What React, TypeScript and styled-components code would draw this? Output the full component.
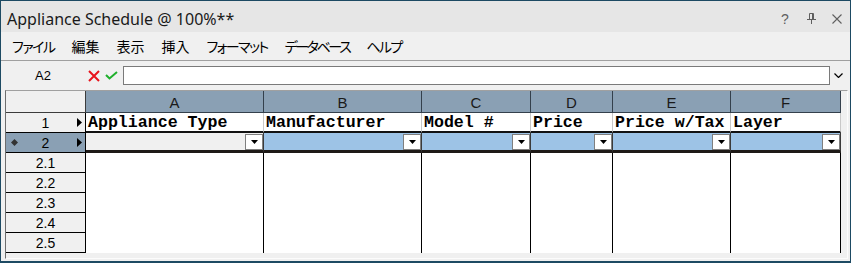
import React from "react";
import styled, { createGlobalStyle } from "styled-components";

const Global = createGlobalStyle`
  html, body { margin: 0; padding: 0; background: #f0f0f0; }
  #root { width: 851px; height: 263px; }
`;

const Window = styled.div`
  box-sizing: border-box;
  width: 851px;
  height: 263px;
  border: 1px solid #1d4a63;
  border-bottom-width: 2px;
  background: #f0f0f0;
  display: flex;
  flex-direction: column;
  overflow: hidden;
`;

const TitleBar = styled.div`
  flex: none;
  height: 31px;
  background: #e6e6e6;
  display: flex;
  align-items: center;
  padding-left: 6px;
`;

const Title = styled.div`
  flex: 1;
  font-family: "Noto Sans", "Liberation Sans", sans-serif;
  font-size: 16px;
  color: #1a1a1a;
  padding-top: 4px;
  white-space: nowrap;
`;

const TitleButton = styled.div`
  width: 26px;
  height: 31px;
  display: flex;
  align-items: center;
  justify-content: center;
  color: #5f5f5f;
  font-family: "Liberation Sans", sans-serif;
  font-size: 14px;
  padding-top: 4px;
  box-sizing: border-box;
`;

const MenuBar = styled.div`
  flex: none;
  height: 28px;
  border-bottom: 1px solid #a0a0a0;
  display: flex;
  align-items: center;
  gap: 17px;
  padding-left: 11px;
  font-family: "Noto Sans CJK JP", sans-serif;
  font-size: 14px;
  font-feature-settings: "palt";
  color: #000;
`;

const MenuItem = styled.span<{ $ls: number }>`
  white-space: nowrap;
  letter-spacing: ${(p) => p.$ls}px;
`;

const FormulaBar = styled.div`
  flex: none;
  height: 29px;
  display: flex;
  align-items: center;
`;

const CellRef = styled.div`
  width: 84px;
  text-align: center;
  font-family: "Liberation Sans", sans-serif;
  font-size: 13px;
  color: #000;
`;

const IconSlot = styled.div<{ $ml: number }>`
  margin-left: ${(p) => p.$ml}px;
  display: flex;
  align-items: center;
`;

const FormulaInput = styled.div`
  margin-left: 5px;
  width: 707px;
  height: 19px;
  box-sizing: border-box;
  border: 1px solid #7a7a7a;
  background: #fff;
`;

const GridFrame = styled.div`
  flex: 1;
  margin: 0 2px 2px 4px;
  border-top: 1px solid #a0a0a0;
  border-left: 1px solid #6d6d6d;
  border-right: 1px solid #fcfcfc;
  border-bottom: 1px solid #fcfcfc;
  padding: 0 6px 5px 0;
  background: #f0f0f0;
`;

const Sheet = styled.div`
  display: grid;
  grid-template-columns: 80px 178px 158px 109px 82px 118px 110px;
  grid-template-rows: 22px repeat(7, 20px);
  width: 835px;
`;

const CellBase = styled.div`
  box-sizing: border-box;
  overflow: hidden;
  white-space: nowrap;
`;

const CornerCell = styled(CellBase)`
  background: #f0f0f0;
  border-right: 1px solid #3c3c3c;
  border-bottom: 1px solid #3c3c3c;
`;

const ColHeader = styled(CellBase)`
  background: #8aa0b4;
  border-right: 1px solid #34404c;
  border-bottom: 1px solid #34404c;
  display: flex;
  align-items: center;
  justify-content: center;
  padding-top: 1px;
  font-family: "Liberation Sans", sans-serif;
  font-size: 15px;
  color: #1a1a1a;
`;

const RowHeader = styled(CellBase)<{ $selected?: boolean }>`
  background: ${(p) => (p.$selected ? "#8aa0b4" : "#f0f0f0")};
  border-right: 1px solid #000;
  border-bottom: 1px solid #000;
  display: grid;
  grid-template-columns: 1fr auto 1fr;
  align-items: center;
  font-family: "Liberation Sans", sans-serif;
  font-size: 14px;
  color: #000;
`;

const RowMarkLeft = styled.span`
  padding-left: 5px;
  display: flex;
  align-items: center;
`;

const RowMarkRight = styled.span`
  justify-self: end;
  margin-right: 3px;
  display: flex;
  align-items: center;
`;

const FieldCell = styled(CellBase)`
  background: #fff;
  border-right: 1px solid #c8c8c8;
  border-bottom: 2px solid #121212;
  padding-left: 2px;
  font-family: "Liberation Mono", monospace;
  font-weight: bold;
  font-size: 16.6px;
  line-height: 18px;
  padding-top: 1px;
  color: #000;
`;

const EditCell = styled(CellBase)<{ $active?: boolean }>`
  background: ${(p) => (p.$active ? "#f0f0f0" : "#9dc3e6")};
  border-right: 1px solid #3a3a3a;
  border-bottom: 3px solid #1e1a17;
  display: flex;
  justify-content: flex-end;
  align-items: flex-start;
  padding-top: 1px;
`;

const DropButton = styled.div`
  width: 18px;
  height: 16px;
  box-sizing: border-box;
  background: #fff;
  border: 1px solid #7f7f7f;
  display: flex;
  align-items: center;
  justify-content: center;
`;

const BodyCell = styled(CellBase)`
  background: #fff;
  border-right: 1px solid #000;
`;

const columns = ["A", "B", "C", "D", "E", "F"];
const fields = ["Appliance Type", "Manufacturer", "Model #", "Price", "Price w/Tax", "Layer"];
const subRows = ["2.1", "2.2", "2.3", "2.4", "2.5"];
const menus: [string, number][] = [
  ["ファイル", -1.5],
  ["編集", 0],
  ["表示", 0],
  ["挿入", 0],
  ["フォーマット", -1.6],
  ["データベース", -2.4],
  ["ヘルプ", -1.6],
];

const RightArrow = () => (
  <svg width="5" height="9" viewBox="0 0 5 9">
    <polygon points="0,0 5,4.5 0,9" fill="#000" />
  </svg>
);

const Diamond = () => (
  <svg width="7" height="7" viewBox="0 0 7 7">
    <polygon points="3.5,0 7,3.5 3.5,7 0,3.5" fill="#333" />
  </svg>
);

const DownTri = () => (
  <svg width="7" height="4" viewBox="0 0 7 4">
    <polygon points="0,0 7,0 3.5,4" fill="#000" />
  </svg>
);

export default function App() {
  return (
    <>
      <Global />
      <Window>
        <TitleBar>
          <Title>Appliance Schedule @ 100%**</Title>
          <TitleButton>?</TitleButton>
          <TitleButton>
            <svg width="9" height="11" viewBox="0 0 9 11">
              <path d="M2.5 0.5 H6.5 V6.5 M2.5 0.5 V6.5 M5.5 0.5 V6.5 M0 6.5 H9 M4.5 6.5 V11" stroke="#5f5f5f" strokeWidth="1" fill="none" />
            </svg>
          </TitleButton>
          <TitleButton>
            <svg width="10" height="10" viewBox="0 0 10 10">
              <path d="M0.5 0.5 L9.5 9.5 M9.5 0.5 L0.5 9.5" stroke="#5f5f5f" strokeWidth="1.1" />
            </svg>
          </TitleButton>
        </TitleBar>
        <MenuBar>
          {menus.map(([m, ls]) => (
            <MenuItem key={m} $ls={ls}>
              {m}
            </MenuItem>
          ))}
        </MenuBar>
        <FormulaBar>
          <CellRef>A2</CellRef>
          <IconSlot $ml={3}>
            <svg width="12" height="12" viewBox="0 0 12 12">
              <path d="M1 1 L11 11 M11 1 L1 11" stroke="#e8141c" strokeWidth="2" />
            </svg>
          </IconSlot>
          <IconSlot $ml={5}>
            <svg width="13" height="9" viewBox="0 0 13 9">
              <path d="M1 4 L4.5 7.5 L12 1" stroke="#1fb02c" strokeWidth="2" fill="none" />
            </svg>
          </IconSlot>
          <FormulaInput />
          <IconSlot $ml={4}>
            <svg width="9" height="5" viewBox="0 0 9 5">
              <path d="M0.5 0.5 L4.5 4.5 L8.5 0.5" stroke="#000" strokeWidth="1.2" fill="none" />
            </svg>
          </IconSlot>
        </FormulaBar>
        <GridFrame>
          <Sheet>
            <CornerCell />
            {columns.map((c) => (
              <ColHeader key={c}>{c}</ColHeader>
            ))}
            <RowHeader>
              <RowMarkLeft />
              <span>1</span>
              <RowMarkRight>
                <RightArrow />
              </RowMarkRight>
            </RowHeader>
            {fields.map((f) => (
              <FieldCell key={f}>{f}</FieldCell>
            ))}
            <RowHeader $selected>
              <RowMarkLeft>
                <Diamond />
              </RowMarkLeft>
              <span>2</span>
              <RowMarkRight>
                <RightArrow />
              </RowMarkRight>
            </RowHeader>
            {columns.map((c, i) => (
              <EditCell key={c} $active={i === 0}>
                <DropButton>
                  <DownTri />
                </DropButton>
              </EditCell>
            ))}
            {subRows.map((r) => (
              <React.Fragment key={r}>
                <RowHeader>
                  <RowMarkLeft />
                  <span>{r}</span>
                  <RowMarkRight />
                </RowHeader>
                {columns.map((c) => (
                  <BodyCell key={c} />
                ))}
              </React.Fragment>
            ))}
          </Sheet>
        </GridFrame>
      </Window>
    </>
  );
}
